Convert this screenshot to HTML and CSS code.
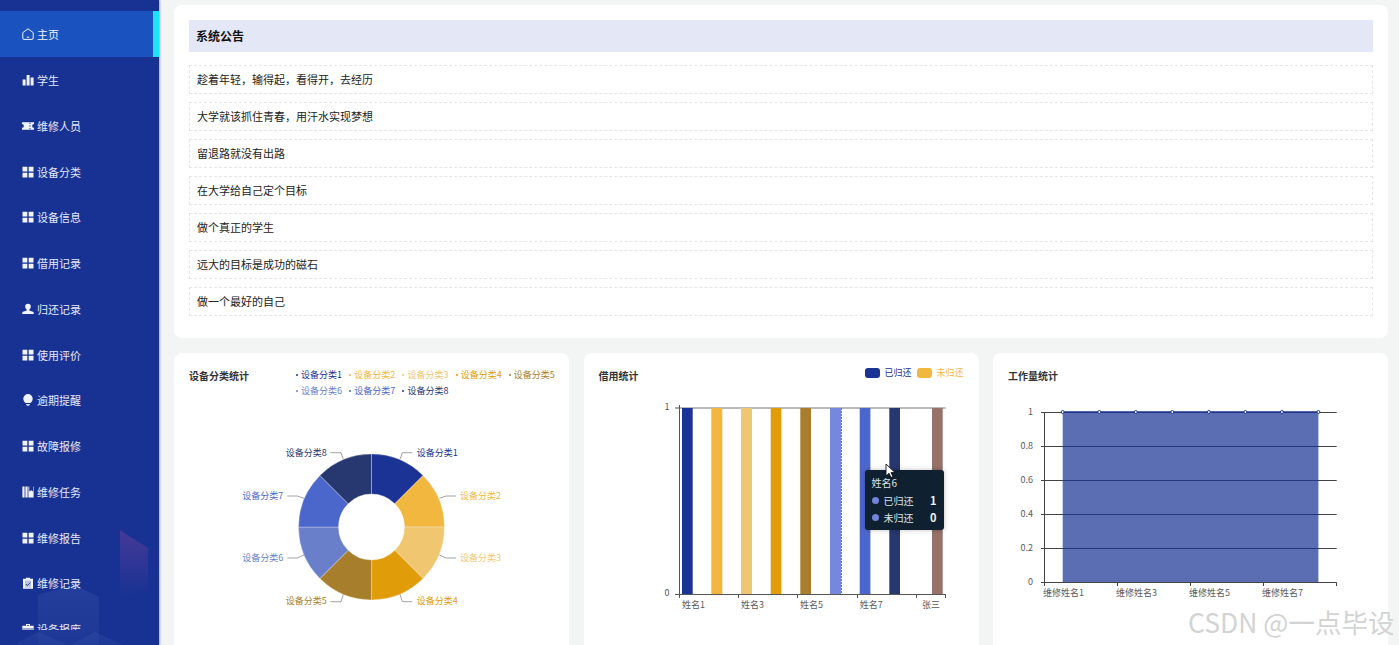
FILE: index.html
```html
<!DOCTYPE html>
<html lang="zh-CN">
<head>
<meta charset="utf-8">
<title>系统首页</title>
<link rel="stylesheet" href="styles.css">
</head>
<body>
<svg class="defs" width="0" height="0" aria-hidden="true">
  <symbol id="i-home" viewBox="0 0 12 12"><path d="M6 .8 11.200 4.600V10.200a1.200 1.200 0 0 1-1.200 1.200H2A1.200 1.200 0 0 1 .8 10.200V4.600Z" fill="none" stroke="currentColor"/><path d="M4.800 9.200h2.400" stroke="currentColor" fill="none"/></symbol>
  <symbol id="i-bar" viewBox="0 0 12 12"><path d="M.6 5.500h3v6h-3ZM4.600 1h3v10.500h-3ZM8.600 3.500h3v8h-3Z" fill="currentColor"/></symbol>
  <symbol id="i-ticket" viewBox="0 0 12 12"><path d="M0 2.200h12v1.800a1.900 1.900 0 0 0 0 3.800v2H0v-2a1.900 1.900 0 0 0 0-3.800Z" fill="currentColor"/><path d="M8 2.600v1.300M8 5.300v1.300M8 8v1.300" stroke="#183293" fill="none"/></symbol>
  <symbol id="i-grid" viewBox="0 0 12 12"><path d="M.5.800h4.800v4.600H.5ZM6.700.800h4.800v4.600H6.700ZM.5 6.800h4.800v4.600H.5ZM6.700 6.800h4.800v4.600H6.700Z" fill="currentColor"/></symbol>
  <symbol id="i-user" viewBox="0 0 12 12"><path d="M6 .7a2.800 2.800 0 0 1 2.800 2.900c0 1.300-.6 2.400-1.500 3v.8l3.700 1.400c.5.2.8.6.8 1.100v1.200H.2V9.900c0-.5.3-.9.8-1.100l3.700-1.400v-.8c-.9-.6-1.500-1.700-1.500-3A2.800 2.800 0 0 1 6 .7Z" fill="currentColor"/></symbol>
  <symbol id="i-bulb" viewBox="0 0 12 12"><path d="M6 0a4.700 4.700 0 0 1 4.700 4.700c0 1.900-1.200 3.100-2.200 4.300H3.500C2.500 7.800 1.300 6.600 1.300 4.700A4.700 4.700 0 0 1 6 0Z" fill="currentColor"/><path d="M4 10h4v.8H4ZM4.700 11.300h2.600v.7H4.700Z" fill="currentColor"/></symbol>
  <symbol id="i-book" viewBox="0 0 12 12"><path d="M.4.600h2.200v10.800H.4ZM3.400.600h2.200v10.800H3.400ZM6.400.600h.9v5l1.900-1.300 1.900 1.300v-5h.5v10.800H6.400Z" fill="currentColor"/></symbol>
  <symbol id="i-clip" viewBox="0 0 12 12"><path d="M4 .8h4v1H11v10H1v-10h3Z" fill="currentColor"/><path d="M3 3.500h6v7H3Z" fill="#183293" opacity=".25"/><path d="m3.800 7 1.600 1.600 3-3" fill="none" stroke="#183293" stroke-width=".9"/></symbol>
  <symbol id="i-case" viewBox="0 0 12 12"><path d="M4 1h4v1.800h3.700v8.200H.3V2.800H4Zm.9.900v.9h2.200v-.9Z" fill="currentColor" fill-rule="evenodd"/><path d="M.3 6h11.400" stroke="#183293" stroke-width=".8"/></symbol>
</svg>

<div class="app">
  <aside class="sidebar">
    <svg class="decor" width="159" height="135" viewBox="0 510 159 135" aria-hidden="true">
      <defs>
        <linearGradient id="dp" x1="0" y1="0" x2="0" y2="1"><stop offset="0" stop-color="#6a3f9c" stop-opacity=".55"/><stop offset="1" stop-color="#6a3f9c" stop-opacity="0"/></linearGradient>
        <linearGradient id="db" x1="0" y1="0" x2="0" y2="1"><stop offset="0" stop-color="#3d58ac" stop-opacity=".32"/><stop offset="1" stop-color="#3d58ac" stop-opacity=".15"/></linearGradient>
      </defs>
      <path d="M120 530 148 548V590L120 596Z" fill="url(#dp)"/>
      <path d="M38 595 75 585 99 597V645H38Z" fill="url(#db)"/>
      <path d="M14 645 38 632 68 645Z" fill="url(#db)"/>
      <path d="M70 645 95 632 122 645Z" fill="url(#db)"/>
    </svg>
    <nav class="menu">
      <a class="menu-item active"><svg class="ico"><use href="#i-home"/></svg>主页</a>
      <a class="menu-item"><svg class="ico"><use href="#i-bar"/></svg>学生</a>
      <a class="menu-item"><svg class="ico"><use href="#i-ticket"/></svg>维修人员</a>
      <a class="menu-item"><svg class="ico"><use href="#i-grid"/></svg>设备分类</a>
      <a class="menu-item"><svg class="ico"><use href="#i-grid"/></svg>设备信息</a>
      <a class="menu-item"><svg class="ico"><use href="#i-grid"/></svg>借用记录</a>
      <a class="menu-item"><svg class="ico"><use href="#i-user"/></svg>归还记录</a>
      <a class="menu-item"><svg class="ico"><use href="#i-grid"/></svg>使用评价</a>
      <a class="menu-item"><svg class="ico"><use href="#i-bulb"/></svg>逾期提醒</a>
      <a class="menu-item"><svg class="ico"><use href="#i-grid"/></svg>故障报修</a>
      <a class="menu-item"><svg class="ico"><use href="#i-book"/></svg>维修任务</a>
      <a class="menu-item"><svg class="ico"><use href="#i-grid"/></svg>维修报告</a>
      <a class="menu-item"><svg class="ico"><use href="#i-clip"/></svg>维修记录</a>
      <a class="menu-item"><svg class="ico"><use href="#i-case"/></svg>设备报废</a>
    </nav>
  </aside>

  <main class="main">
    <section class="card notice">
      <h2 class="notice-head">系统公告</h2>
      <ul class="notice-list">
        <li class="notice-row">趁着年轻，输得起，看得开，去经历</li>
        <li class="notice-row">大学就该抓住青春，用汗水实现梦想</li>
        <li class="notice-row">留退路就没有出路</li>
        <li class="notice-row">在大学给自己定个目标</li>
        <li class="notice-row">做个真正的学生</li>
        <li class="notice-row">远大的目标是成功的磁石</li>
        <li class="notice-row">做一个最好的自己</li>
      </ul>
    </section>

    <div class="charts">
      <section class="card chart">
        <header class="chart-head">
          <h3 class="chart-title">设备分类统计</h3>
          <ul class="dot-legend">
            <li class="c1">设备分类1</li><li class="c2">设备分类2</li><li class="c3">设备分类3</li><li class="c4">设备分类4</li><li class="c5">设备分类5</li>
            <li class="c6">设备分类6</li><li class="c7">设备分类7</li><li class="c8">设备分类8</li>
          </ul>
        </header>
        <svg class="plot" viewBox="174 398 395 247">
          <g stroke="#fff" stroke-width=".3">
            <path d="M371.500 454A73 73 0 0 1 423.100 475.400L394.800 503.700A33 33 0 0 0 371.500 494Z" fill="#1a3394"/>
            <path d="M423.100 475.400A73 73 0 0 1 444.500 527H404.500A33 33 0 0 0 394.800 503.700Z" fill="#f1b73f"/>
            <path d="M444.500 527A73 73 0 0 1 423.100 578.600L394.800 550.300A33 33 0 0 0 404.500 527Z" fill="#f0c670"/>
            <path d="M423.100 578.600A73 73 0 0 1 371.500 600V560A33 33 0 0 0 394.800 550.300Z" fill="#e19c0a"/>
            <path d="M371.500 600A73 73 0 0 1 319.900 578.600L348.200 550.300A33 33 0 0 0 371.500 560Z" fill="#a67e2c"/>
            <path d="M319.900 578.600A73 73 0 0 1 298.500 527H338.500A33 33 0 0 0 348.200 550.300Z" fill="#6a7fca"/>
            <path d="M298.500 527A73 73 0 0 1 319.900 475.400L348.200 503.700A33 33 0 0 0 338.500 527Z" fill="#4c67cc"/>
            <path d="M319.900 475.400A73 73 0 0 1 371.500 454V494A33 33 0 0 0 348.200 503.700Z" fill="#27376f"/>
          </g>
          <g fill="none" stroke="#8a8a8a" stroke-width=".8">
            <path d="M400 459.300 402.300 452.700H412.300"/>
            <path d="M439.300 498.300 446 496H456"/>
            <path d="M439.300 555 446 558H456"/>
            <path d="M400 594.300 402.300 601.700H412.300"/>
            <path d="M343.300 594.300 341 601.700H330.300"/>
            <path d="M304 555 297.300 558H287.300"/>
            <path d="M304 498.300 297.300 496H287.300"/>
            <path d="M343.300 459.300 341 452.700H330.300"/>
          </g>
          <g class="plabel">
            <text x="416.700" y="455.500" fill="#1a3394">设备分类1</text>
            <text x="460" y="498.500" fill="#f1b73f">设备分类2</text>
            <text x="460" y="560.500" fill="#f0c670">设备分类3</text>
            <text x="416.700" y="604" fill="#e19c0a">设备分类4</text>
            <text x="326.700" y="604" text-anchor="end" fill="#a67e2c">设备分类5</text>
            <text x="283.300" y="560.500" text-anchor="end" fill="#6a7fca">设备分类6</text>
            <text x="283.300" y="498.500" text-anchor="end" fill="#4c67cc">设备分类7</text>
            <text x="326.700" y="455.500" text-anchor="end" fill="#27376f">设备分类8</text>
          </g>
        </svg>
      </section>

      <section class="card chart">
        <header class="chart-head">
          <h3 class="chart-title">借用统计</h3>
          <ul class="box-legend">
            <li class="k1">已归还</li>
            <li class="k2">未归还</li>
          </ul>
        </header>
        <svg class="plot" viewBox="584 398 395 247">
          <path d="M679.500 408H945.700" stroke="#777" fill="none"/>
          <path d="M682 408h10.700v186H682Z" fill="#1a3394"/>
          <path d="M711.300 408h11v186h-11Z" fill="#f1b73f"/>
          <path d="M741 408h11v186h-11Z" fill="#f0c670"/>
          <path d="M770.700 408h10.700v186h-10.700Z" fill="#e19c0a"/>
          <path d="M800.300 408h10.700v186h-10.700Z" fill="#a67e2c"/>
          <path d="M830 408h11v186h-11Z" fill="#7489dd"/>
          <path d="M859.700 408h10.700v186h-10.700Z" fill="#4c67cc"/>
          <path d="M889.300 408h10.700v186h-10.700Z" fill="#27376f"/>
          <path d="M932 408h10.700v186H932Z" fill="#967269"/>
          <path d="M841.500 408V594" stroke="#2f8fd6" stroke-dasharray="2 1" fill="none"/>
          <path d="M679.500 405V594.500H945.700M675 408H680M675 594.500H680M679.500 594.500v3.500M738.500 594.500v3.500M797.500 594.500v3.500M857.500 594.500v3.500M916.500 594.500v3.500M945.500 594.500v3.500" stroke="#555" fill="none"/>
          <g class="axis">
            <text x="669.500" y="410" text-anchor="end">1</text>
            <text x="669.500" y="596" text-anchor="end">0</text>
            <text x="682" y="608">姓名1</text>
            <text x="741" y="608">姓名3</text>
            <text x="800" y="608">姓名5</text>
            <text x="859.700" y="608">姓名7</text>
            <text x="922" y="608">张三</text>
          </g>
        </svg>
        <div class="tip">
          <div class="tip-title">姓名6</div>
          <div class="tip-row"><i class="tip-dot"></i><span class="tip-name">已归还</span><b>1</b></div>
          <div class="tip-row"><i class="tip-dot"></i><span class="tip-name">未归还</span><b>0</b></div>
        </div>
        <svg class="cursor" width="12" height="16" viewBox="0 0 12 16" aria-hidden="true"><path d="M1 1V13L4 10.300 6 14.500 8 13.600 6 9.600H10Z" fill="#fff" stroke="#111" stroke-width=".9"/></svg>
      </section>

      <section class="card chart">
        <header class="chart-head">
          <h3 class="chart-title">工作量统计</h3>
        </header>
        <svg class="plot" viewBox="993 398 395 247">
          <path d="M1041 412.500H1336.700M1041 446.500H1336.700M1041 480.500H1336.700M1041 514.500H1336.700M1041 548.500H1336.700" stroke="#444" fill="none"/>
          <path d="M1062.700 412.500H1318.400V582H1062.700Z" fill="#1a3394" opacity=".71"/>
          <path d="M1062.700 412H1318.400" stroke="#1a3394" stroke-width="1.500" fill="none"/>
          <path d="M1044.500 412V582.500M1041 582.500H1336.700M1044.500 582.500v3.500M1117.500 582.500v3.500M1190.500 582.500v3.500M1263.500 582.500v3.500M1336.500 582.500v3.500" stroke="#444" fill="none"/>
          <g fill="#fff" stroke="#1a3394">
            <circle cx="1062.700" cy="412" r="1.500"/><circle cx="1099.300" cy="412" r="1.500"/><circle cx="1135.800" cy="412" r="1.500"/><circle cx="1172.300" cy="412" r="1.500"/>
            <circle cx="1208.900" cy="412" r="1.500"/><circle cx="1245.400" cy="412" r="1.500"/><circle cx="1281.900" cy="412" r="1.500"/><circle cx="1318.400" cy="412" r="1.500"/>
          </g>
          <g class="axis">
            <text x="1033" y="415" text-anchor="end">1</text>
            <text x="1033" y="449" text-anchor="end">0.8</text>
            <text x="1033" y="483" text-anchor="end">0.6</text>
            <text x="1033" y="517" text-anchor="end">0.4</text>
            <text x="1033" y="551" text-anchor="end">0.2</text>
            <text x="1033" y="585" text-anchor="end">0</text>
            <text x="1043" y="596">维修姓名1</text>
            <text x="1116" y="596">维修姓名3</text>
            <text x="1189" y="596">维修姓名5</text>
            <text x="1262" y="596">维修姓名7</text>
          </g>
        </svg>
      </section>
    </div>
  </main>
</div>
<div class="watermark">CSDN @一点毕设</div>
</body>
</html>
```

FILE: styles.css
```css
* { box-sizing: border-box; }
html, body { margin: 0; height: 100%; overflow: hidden; }
body {
  position: relative;
  background: #f3f5f5;
  color: #222;
  font-family: "Noto Sans CJK SC", "Noto Sans", sans-serif;
}
ul { list-style: none; margin: 0; padding: 0; }
h2, h3 { margin: 0; }
.defs { position: absolute; }

.app { display: flex; height: 645px; }

.sidebar {
  position: relative;
  flex: 0 0 159px;
  background: #183293;
  padding-top: 11px;
  box-shadow: 1px 0 2px rgba(60, 70, 110, .45);
  overflow: hidden;
}
.decor { position: absolute; left: 0; bottom: 0; }
.menu { position: relative; height: 619px; overflow: hidden; }
.menu-item {
  display: flex;
  align-items: center;
  gap: 3px;
  height: 45.75px;
  padding: 1px 0 0 22px;
  color: #e4e8f6;
  font-size: 11px;
}
.menu-item.active {
  background: #1a52c0;
  border-right: 6px solid #1ae4fb;
  color: #f2f5fc;
}
.ico { width: 12px; height: 12px; flex: none; color: #f0f3fb; }

.main {
  flex: 1;
  min-width: 0;
  display: flex;
  flex-direction: column;
  gap: 15px;
  padding: 5px 11px 0 15px;
}
.card { background: #fff; border-radius: 8px; }

.notice { flex: none; height: 333px; padding: 15px; }
.notice-head {
  height: 32px;
  margin-bottom: 13px;
  padding-left: 7px;
  background: #e4e7f5;
  color: #111;
  font-size: 12px;
  font-weight: 700;
  line-height: 32px;
}
.notice-list { display: flex; flex-direction: column; gap: 8px; }
.notice-row {
  height: 29px;
  padding-left: 7px;
  border: 1px dashed #e3e5e7;
  color: #222;
  font-size: 11px;
  line-height: 27px;
}

.charts { flex: none; display: grid; grid-template-columns: repeat(3, 1fr); gap: 14.5px; }
.chart { position: relative; height: 300px; }
.chart-head {
  display: flex;
  justify-content: space-between;
  align-items: flex-start;
  height: 45px;
  padding: 15px 15px 0;
}
.chart-title {
  color: #333;
  font-size: 10px;
  font-weight: 700;
  line-height: 16px;
}
.plot { display: block; width: 395px; height: 247px; }

.dot-legend {
  display: grid;
  grid-template-columns: repeat(5, 53.2px);
  grid-auto-rows: 16px;
  margin: -1px -8px 0 0;
  font-size: 9px;
  line-height: 16px;
}
.dot-legend li { display: flex; align-items: center; gap: 3px; }
.dot-legend li::before {
  content: "";
  width: 2px;
  height: 2px;
  border-radius: 50%;
  background: currentColor;
}
.c1 { color: #1a3394; }
.c2 { color: #f1b73f; }
.c3 { color: #f0c670; }
.c4 { color: #e19c0a; }
.c5 { color: #a67e2c; }
.c6 { color: #6a7fca; }
.c7 { color: #4c67cc; }
.c8 { color: #27376f; }

.plabel text { font-size: 9px; }
.axis text { font-size: 9px; fill: #5a5a5a; }

.box-legend { display: flex; gap: 6px; margin-top: 0; font-size: 9px; line-height: 10px; }
.box-legend li { display: flex; align-items: center; gap: 4px; }
.box-legend li::before { content: ""; width: 15px; height: 10px; border-radius: 3px; background: currentColor; }
.k1 { color: #1a3394; }
.k2 { color: #f1b73f; }

.tip {
  position: absolute;
  left: 281px;
  top: 117px;
  width: 79px;
  height: 60px;
  padding: 4px 7px;
  background: #0f2030;
  border-radius: 3px;
  box-shadow: 0 0 5px rgba(0, 0, 0, .25);
  color: #dfe3e8;
  font-size: 10px;
  line-height: 17.5px;
}
.tip-row { display: flex; align-items: center; }
.tip-dot { width: 7px; height: 7px; border-radius: 50%; background: #7484d8; margin-right: 5px; }
.tip-name { flex: 1; }
.tip-row b { color: #f2f4f6; font-size: 11px; }
.cursor { position: absolute; left: 301px; top: 110px; }

.watermark {
  position: absolute;
  left: 1188px;
  top: 604px;
  color: #d2d4d4;
  font-size: 26.5px;
  line-height: 36px;
  white-space: nowrap;
}
```
